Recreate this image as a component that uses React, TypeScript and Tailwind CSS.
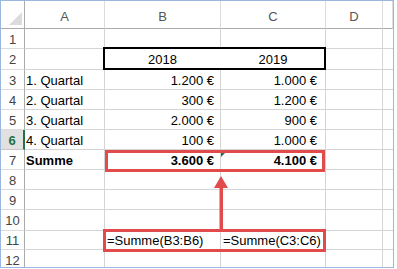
import React from "react";

type Cell = { text?: string; align?: "left" | "right" | "center"; bold?: boolean };
type Row = { n: number; h: string; a?: Cell; b?: Cell; c?: Cell };

const ROWS: Row[] = [
  { n: 1, h: "h-[20px]" },
  { n: 2, h: "h-[21px]", b: { text: "2018", align: "center" }, c: { text: "2019", align: "center" } },
  { n: 3, h: "h-[20px]", a: { text: "1. Quartal" }, b: { text: "1.200 €", align: "right" }, c: { text: "1.000 €", align: "right" } },
  { n: 4, h: "h-[20px]", a: { text: "2. Quartal" }, b: { text: "300 €", align: "right" }, c: { text: "1.200 €", align: "right" } },
  { n: 5, h: "h-[20px]", a: { text: "3. Quartal" }, b: { text: "2.000 €", align: "right" }, c: { text: "900 €", align: "right" } },
  { n: 6, h: "h-[20px]", a: { text: "4. Quartal" }, b: { text: "100 €", align: "right" }, c: { text: "1.000 €", align: "right" } },
  {
    n: 7,
    h: "h-[20px]",
    a: { text: "Summe", bold: true },
    b: { text: "3.600 €", align: "right", bold: true },
    c: { text: "4.100 €", align: "right", bold: true },
  },
  { n: 8, h: "h-[20px]" },
  { n: 9, h: "h-[20px]" },
  { n: 10, h: "h-[21px]" },
  { n: 11, h: "h-[19px]", b: { text: "=Summe(B3:B6)" }, c: { text: "=Summe(C3:C6)" } },
  { n: 12, h: "h-[20px]" },
];

const ACTIVE_ROW = 6;

function DataCell({ cell, col, noRight }: { cell?: Cell; col: "a" | "b" | "c"; noRight?: boolean }) {
  const align = cell?.align ?? "left";
  return (
    <div
      className={[
        "flex items-center border-b border-r border-[#d4d4d4] overflow-visible whitespace-nowrap pt-[1px]",
        noRight ? "border-r-white" : "",
        align === "right" ? "justify-end" : align === "center" ? "justify-center" : "justify-start",
        align === "right" ? (col === "c" ? "pr-[8px]" : "pr-[6px]") : "",
        align === "left" ? (col === "a" ? "pl-[1px]" : "pl-[2px]") : "",
        cell?.bold ? "font-bold" : "",
      ].join(" ")}
    >
      {cell?.text}
    </div>
  );
}

export default function App() {
  return (
    <div
      className="relative w-[397px] h-[269px] bg-white text-[13px] leading-[15px] text-black"
      style={{ fontFamily: '"Liberation Sans", Arial, sans-serif' }}
    >
      <div className="w-[394px] h-[268px] border border-[#9bb7e0] overflow-hidden">
        <div className="grid grid-cols-[24px_80px_116px_105px_57px_1fr]">
          {/* Column headers */}
          <div className="relative h-[28px] border-b border-r border-[#ababab]">
            <svg className="absolute left-[8px] top-[11px]" width="13" height="13" viewBox="0 0 13 13">
              <polygon points="13,0 13,13 0,13" fill="#dcdcdc" />
            </svg>
          </div>
          {["A", "B", "C", "D", ""].map((l, i) => (
            <div
              key={i}
              className="h-[28px] flex items-center justify-center pt-[4px] border-b border-b-[#ababab] border-r border-r-[#dcdcdc] text-[#555]"
            >
              {l}
            </div>
          ))}

          {ROWS.map((r) => (
            <React.Fragment key={r.n}>
              <div
                className={[
                  r.h,
                  "flex items-center justify-center pt-[1px] border-b",
                  r.n === ACTIVE_ROW
                    ? "bg-[#e1e1e1] text-[#217346] font-bold border-b-[#c6c6c6] border-r-2 border-r-[#217346]"
                    : "text-[#444] border-b-[#dcdcdc] border-r border-r-[#ababab]",
                ].join(" ")}
              >
                {r.n}
              </div>
              <DataCell cell={r.a} col="a" />
              <DataCell cell={r.b} col="b" noRight={r.n === 2} />
              <DataCell cell={r.c} col="c" />
              <div className="border-b border-r border-[#d4d4d4]" />
              <div className="border-b border-[#d4d4d4]" />
            </React.Fragment>
          ))}
        </div>
      </div>

      {/* Header box around 2018 / 2019 */}
      <div className="absolute left-[103px] top-[47px] w-[223px] h-[23px] border-2 border-black" />

      {/* Annotation boxes */}
      <div className="absolute left-[105px] top-[150px] w-[220px] h-[22px] border-[3px] border-[#e24b4b]" />
      <div className="absolute left-[221px] top-[153px] w-0 h-0 border-t-[4px] border-t-[#217346] border-r-[4px] border-r-transparent" />
      <div className="absolute left-[103px] top-[229px] w-[223px] h-[23px] border-[3px] border-[#e24b4b]" />

      {/* Arrow */}
      <svg className="absolute left-[212px] top-[174px]" width="20" height="56" viewBox="0 0 20 56">
        <polygon points="9,2 2,14 16,14" fill="#e24b4b" />
        <rect x="7.5" y="13" width="3.5" height="42" fill="#e24b4b" />
      </svg>
    </div>
  );
}
